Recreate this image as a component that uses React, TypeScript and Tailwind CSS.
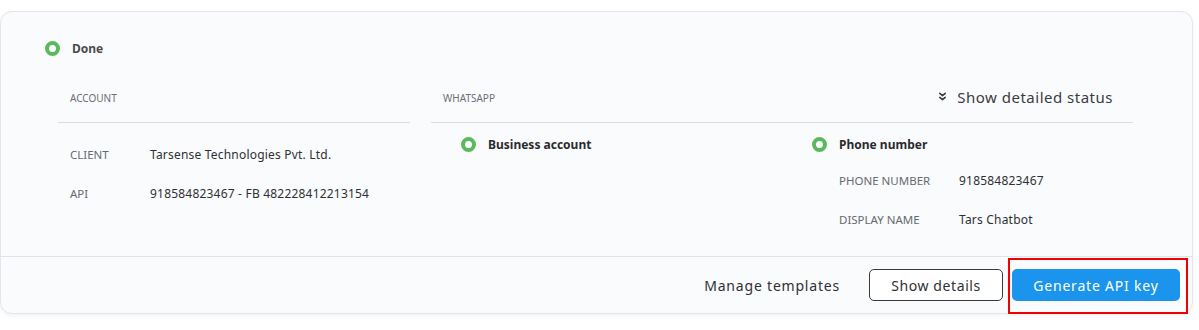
import { ReactNode } from 'react';

function StatusDot() {
  return (
    <span className="inline-block w-[15px] h-[15px] rounded-full border-[4px] border-[#5cb85c] shrink-0" />
  );
}

function Field({ label, value, width }: { label: string; value: string; width: string }) {
  return (
    <div className="flex items-center h-[39px]">
      <div className={`${width} text-[11.5px] text-[#666a70] uppercase`}>{label}</div>
      <div className="text-[12px] tracking-[0.2px] text-[#2f3033]">{value}</div>
    </div>
  );
}

function Section({ children }: { children: ReactNode }) {
  return <div className="flex flex-col">{children}</div>;
}

export default function App() {
  return (
    <main
      className="w-[1199px] h-[330px] bg-white pt-[11px] overflow-hidden"
      style={{ fontFamily: '"Noto Sans", Lato, sans-serif' }}
    >
      <div className="w-[1193px] h-[303px] rounded-[12px] border border-[#e3e6ec] bg-[#fafbfd] shadow-[0_2px_4px_rgba(0,0,0,0.05)] flex flex-col">
        <div className="flex-1 flex flex-col pt-[29px]">
          <div className="flex items-center gap-[12px] pl-[44px] h-[15px]">
            <StatusDot />
            <span className="text-[12px] font-bold text-[#4a4a4e]">Done</span>
          </div>

          <div className="flex ml-[57px] gap-[21px]">
            <Section>
              <div className="w-[352px] h-[67px] flex items-end pb-[16px] pl-[12px] border-b border-[#d9dce5]">
                <span className="text-[10px] text-[#6b6e74] uppercase">Account</span>
              </div>
              <div className="pl-[12px] pt-[12px]">
                <Field label="Client" value="Tarsense Technologies Pvt. Ltd." width="w-[80px]" />
                <Field label="API" value="918584823467 - FB 482228412213154" width="w-[80px]" />
              </div>
            </Section>

            <Section>
              <div className="w-[702px] h-[67px] flex items-end justify-between pb-[16px] pl-[12px] pr-[20px] border-b border-[#d9dce5]">
                <span className="text-[10px] text-[#6b6e74] uppercase">Whatsapp</span>
                <button type="button" className="flex items-center gap-[10px] -mb-[2px] text-[15px] tracking-[0.5px] text-[#3a3b3f]">
                  <svg width="9" height="9" viewBox="0 0 10 10" fill="none" stroke="#3a3b3f" strokeWidth="1.8" strokeLinecap="round" strokeLinejoin="round">
                    <path d="M2 1.5 L5 4 L8 1.5" />
                    <path d="M2 6 L5 8.5 L8 6" />
                  </svg>
                  Show detailed status
                </button>
              </div>
              <div className="flex pt-[14px]">
                <div className="w-[381px] pl-[30px]">
                  <div className="flex items-center gap-[12px] h-[15px]">
                    <StatusDot />
                    <span className="text-[12px] font-bold text-[#2a2b2e]">Business account</span>
                  </div>
                </div>
                <div className="flex flex-col">
                  <div className="flex items-center gap-[12px] h-[15px]">
                    <StatusDot />
                    <span className="text-[12px] font-bold text-[#2a2b2e]">Phone number</span>
                  </div>
                  <div className="pl-[27px] pt-[9px]">
                    <Field label="Phone number" value="918584823467" width="w-[120px]" />
                    <Field label="Display name" value="Tars Chatbot" width="w-[120px]" />
                  </div>
                </div>
              </div>
            </Section>
          </div>
        </div>

        <footer className="h-[57px] border-t border-[#dfe3ec] flex items-center justify-end pr-[12px]">
          <button type="button" className="text-[14px] tracking-[0.8px] text-[#2f3033] mr-[29px]">
            Manage templates
          </button>
          <button
            type="button"
            className="w-[134px] h-[32px] rounded-[5px] border border-[#3a3b3f] bg-white text-[14px] tracking-[0.6px] text-[#2f3033] mr-[9px]"
          >
            Show details
          </button>
          <div className="relative">
            <button
              type="button"
              className="w-[168px] h-[32px] rounded-[5px] bg-[#1a94ec] text-[14px] tracking-[0.8px] text-white"
            >
              Generate API key
            </button>
            <div className="absolute -left-[4px] -right-[8px] -top-[11px] -bottom-[13px] border-2 border-[#f00000] pointer-events-none" />
          </div>
        </footer>
      </div>
    </main>
  );
}
